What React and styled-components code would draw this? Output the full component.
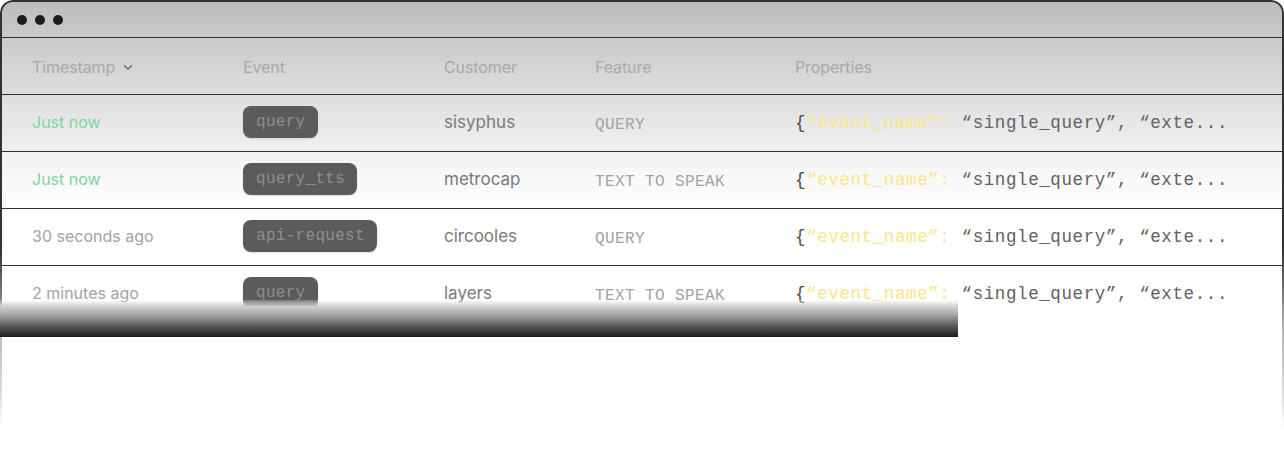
import React from "react";
import styled, { createGlobalStyle } from "styled-components";

const Global = createGlobalStyle`
  html, body { margin: 0; padding: 0; background: #ffffff; }
  body { width: 1284px; height: 473px; overflow: hidden; font-family: Inter, "Noto Sans", sans-serif; }
`;

const Page = styled.div`
  position: relative;
  width: 1284px;
  height: 473px;
  background: #fff;
  overflow: hidden;
`;

const Window = styled.div`
  position: relative;
  width: 1284px;
  height: 473px;
  box-sizing: border-box;
  padding: 2px 2px 0 2px;
  border-radius: 13px 13px 0 0;
  background: linear-gradient(180deg, #bcbcbc 0px, #d2d2d2 60px, #e6e6e6 120px, #f7f7f7 170px, #ffffff 215px, #ffffff 100%);
  &::before {
    content: "";
    position: absolute;
    inset: 0;
    border: 2px solid #333;
    border-bottom: none;
    border-radius: 13px 13px 0 0;
    pointer-events: none;
    -webkit-mask-image: linear-gradient(180deg, #000 0px, #000 250px, rgba(0,0,0,0.35) 330px, rgba(0,0,0,0.18) 390px, transparent 430px);
    mask-image: linear-gradient(180deg, #000 0px, #000 250px, rgba(0,0,0,0.35) 330px, rgba(0,0,0,0.18) 390px, transparent 430px);
  }
`;

const TitleBar = styled.div`
  height: 35px;
  display: flex;
  align-items: center;
  gap: 8px;
  padding-left: 15px;
  border-bottom: 1.5px solid #2f2f2f;
`;

const Dot = styled.span`
  width: 10px;
  height: 10px;
  border-radius: 50%;
  background: #1c1c1c;
`;

const Row = styled.div`
  display: grid;
  grid-template-columns: 211px 201px 151px 200px 1fr;
  align-items: center;
  height: 56px;
  padding-left: 30px;
  border-bottom: ${(p) => (p.$last ? "none" : "1.5px solid #2f2f2f")};
`;

const HeadCell = styled.div`
  display: flex;
  align-items: center;
  gap: 7px;
  font-size: 16px;
  color: #a9a9a9;
  letter-spacing: -0.1px;
  margin-top: 1px;
`;

const Time = styled.div`
  font-size: 16px;
  color: ${(p) => (p.$fresh ? "#7fd69a" : "#a3a3a3")};
  margin-top: -2px;
`;

const Badge = styled.span`
  justify-self: start;
  display: inline-flex;
  align-items: center;
  height: 32px;
  padding: 0 12px 0 13px;
  border-radius: 8px;
  background: #5b5b5b;
  box-shadow: 0 1px 2px rgba(0,0,0,0.12);
  font-family: "Liberation Mono", "DejaVu Sans Mono", monospace;
  font-size: 16px;
  letter-spacing: 0.3px;
  color: #8e8e8e;
  margin-top: -2px;
`;

const Customer = styled.div`
  font-size: 17px;
  color: #7a7a7a;
  margin-top: -2px;
`;

const Feature = styled.div`
  font-family: "Liberation Mono", "DejaVu Sans Mono", monospace;
  font-size: 16px;
  letter-spacing: 0.4px;
  color: #a3a3a3;
  margin-top: 4px;
`;

const Props = styled.div`
  font-family: "Liberation Mono", "DejaVu Sans Mono", monospace;
  font-size: 17.5px;
  letter-spacing: 0.6px;
  color: #616166;
  white-space: nowrap;
  margin-top: -1px;
`;

const Brace = styled.span`
  color: #4a4a3c;
`;

const Key = styled.span`
  color: #fbe58a;
`;

const Fade = styled.div`
  position: absolute;
  left: 0;
  top: 300px;
  width: 958px;
  height: 37px;
  background: linear-gradient(180deg, rgba(255,255,255,0.2) 0%, #d0d0d0 18%, #9a9a9a 45%, #5a5a5a 70%, #1c1c1c 100%);
  pointer-events: none;
`;

const Chevron = () => (
  <svg width="12" height="12" viewBox="0 0 12 12" fill="none">
    <path d="M2.5 4.5 L6 8 L9.5 4.5" stroke="#6a6a6a" strokeWidth="1.4" strokeLinecap="round" strokeLinejoin="round" />
  </svg>
);

const rows = [
  { time: "Just now", fresh: true, event: "query", customer: "sisyphus", feature: "QUERY" },
  { time: "Just now", fresh: true, event: "query_tts", customer: "metrocap", feature: "TEXT TO SPEAK" },
  { time: "30 seconds ago", event: "api-request", customer: "circooles", feature: "QUERY" },
  { time: "2 minutes ago", event: "query", customer: "layers", feature: "TEXT TO SPEAK" },
];

export default function App() {
  return (
    <Page>
      <Global />
      <Window>
        <TitleBar>
          <Dot />
          <Dot />
          <Dot />
        </TitleBar>
        <Row>
          <HeadCell>
            Timestamp <Chevron />
          </HeadCell>
          <HeadCell>Event</HeadCell>
          <HeadCell>Customer</HeadCell>
          <HeadCell>Feature</HeadCell>
          <HeadCell>Properties</HeadCell>
        </Row>
        {rows.map((r, i) => (
          <Row key={i} $last={i === rows.length - 1}>
            <Time $fresh={r.fresh}>{r.time}</Time>
            <div>
              <Badge>{r.event}</Badge>
            </div>
            <Customer>{r.customer}</Customer>
            <Feature>{r.feature}</Feature>
            <Props>
              <Brace>{"{"}</Brace>
              <Key>{"“event_name”:"}</Key>
              {" “single_query”, “exte..."}
            </Props>
          </Row>
        ))}
      </Window>
      <Fade />
    </Page>
  );
}
